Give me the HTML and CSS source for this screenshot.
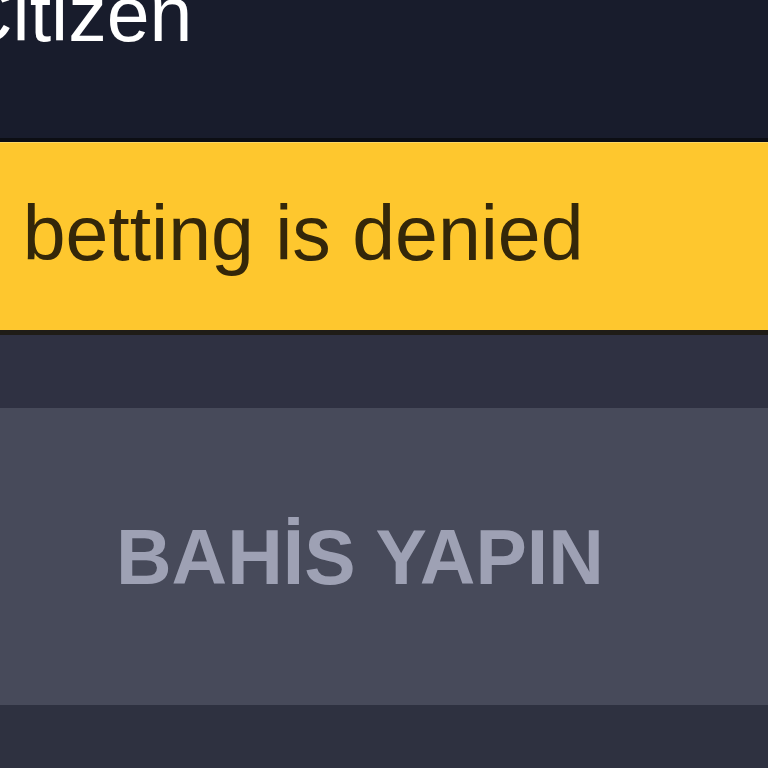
FILE: index.html
```
<!DOCTYPE html>
<html lang="tr">
<head>
<meta charset="utf-8">
<title>Bahis</title>
<link rel="stylesheet" href="styles.css">
</head>
<body>
<div class="page">
  <header class="topbar">
    <div class="topbar-title">Citizen</div>
  </header>
  <div class="notice">
    <div class="notice-text">citizen betting is denied</div>
  </div>
  <div class="gap"></div>
  <div class="bet-button">
    <span class="bet-label">BAHİS YAPIN</span>
  </div>
  <div class="footer-area"></div>
</div>
</body>
</html>
```
FILE: styles.css
```
html, body {
  margin: 0;
  padding: 0;
  width: 768px;
  height: 768px;
  overflow: hidden;
  background: #2e3141;
  font-family: "Liberation Sans", Arial, sans-serif;
}

.page {
  display: flex;
  flex-direction: column;
  width: 768px;
  height: 768px;
  overflow: hidden;
}

.topbar {
  height: 138px;
  background: #181c2c;
  border-bottom: 4px solid #0c0e14;
  overflow: hidden;
  flex: none;
}

.topbar-title {
  margin-top: -24px;
  margin-left: -43px;
  font-size: 77px;
  line-height: 76px;
  color: #ffffff;
  white-space: nowrap;
}

.notice {
  flex: none;
  background: #fec72e;
  border-top: 1px solid #fdd664;
  border-bottom: 5px solid #1f1c17;
  box-sizing: border-box;
  height: 193px;
  padding-top: 52px;
  overflow: hidden;
}

.notice-text {
  margin-left: -217px;
  font-size: 77px;
  line-height: 76px;
  color: #342709;
  white-space: nowrap;
}

.gap {
  flex: none;
  height: 73px;
  background: #2f3142;
}

.bet-button {
  flex: none;
  height: 297px;
  background: #474a5a;
  display: flex;
  align-items: center;
  padding-left: 116px;
  box-sizing: border-box;
}

.bet-label {
  font-size: 77px;
  line-height: 76px;
  font-weight: bold;
  color: #9ea1b4;
  white-space: nowrap;
}

.footer-area {
  flex: 1;
  background: #2e3140;
}
```
